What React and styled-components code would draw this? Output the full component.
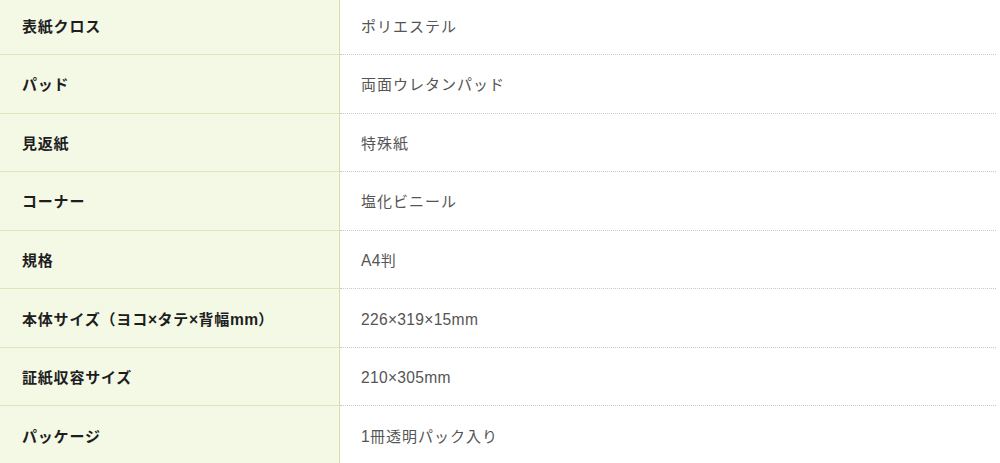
import React from "react";
import styled, { createGlobalStyle } from "styled-components";

const Global = createGlobalStyle`
  html, body { margin: 0; padding: 0; background: #fff; }
  body { font-family: "Liberation Sans", "Noto Sans CJK JP", sans-serif; overflow: hidden; }
`;

const Table = styled.div`
  width: 996px;
  margin-top: -3.5px;
  display: grid;
  grid-template-columns: 340px 1fr;
`;

const Head = styled.div`
  height: 58.5px;
  box-sizing: border-box;
  display: flex;
  align-items: center;
  padding: 3px 0 0 22px;
  background: #f4f9e6;
  border-bottom: ${(p) => (p.$last ? "none" : "1px solid #dbe7b6")};
  border-right: 1px solid #d3e1a6;
  font-size: 15px;
  font-weight: 700;
  letter-spacing: 0.8px;
  color: #1e1e1e;
`;

const Value = styled.div`
  height: 58.5px;
  box-sizing: border-box;
  display: flex;
  align-items: center;
  padding: 3px 0 0 21px;
  border-bottom: ${(p) => (p.$last ? "none" : "1px dotted #c8c8c8")};
  font-size: 15px;
  letter-spacing: 1px;
  color: #555;
`;

const Line = styled.span`
  white-space: pre;
  line-height: 1.5;
`;

const Latin = styled.span`
  font-size: 15.6px;
  letter-spacing: 0.3px;
`;

const rows = [
  ["表紙クロス", "ポリエステル"],
  ["パッド", "両面ウレタンパッド"],
  ["見返紙", "特殊紙"],
  ["コーナー", "塩化ビニール"],
  ["規格", "A4判"],
  ["本体サイズ（ヨコ×タテ×背幅mm）", "226×319×15mm"],
  ["証紙収容サイズ", "210×305mm"],
  ["パッケージ", "1冊透明パック入り"],
];

function Text({ children }) {
  return (
    <Line>
      {children
        .split(/([0-9A-Za-z×]+)/)
        .filter(Boolean)
        .map((part, i) =>
          /^[0-9A-Za-z×]+$/.test(part) ? <Latin key={i}>{part}</Latin> : part
        )}
    </Line>
  );
}

export default function App() {
  return (
    <>
      <Global />
      <Table>
        {rows.map(([h, v], i) => {
          const last = i === rows.length - 1;
          return (
            <React.Fragment key={h}>
              <Head $last={last}>
                <Text>{h}</Text>
              </Head>
              <Value $last={last}>
                <Text>{v}</Text>
              </Value>
            </React.Fragment>
          );
        })}
      </Table>
    </>
  );
}
